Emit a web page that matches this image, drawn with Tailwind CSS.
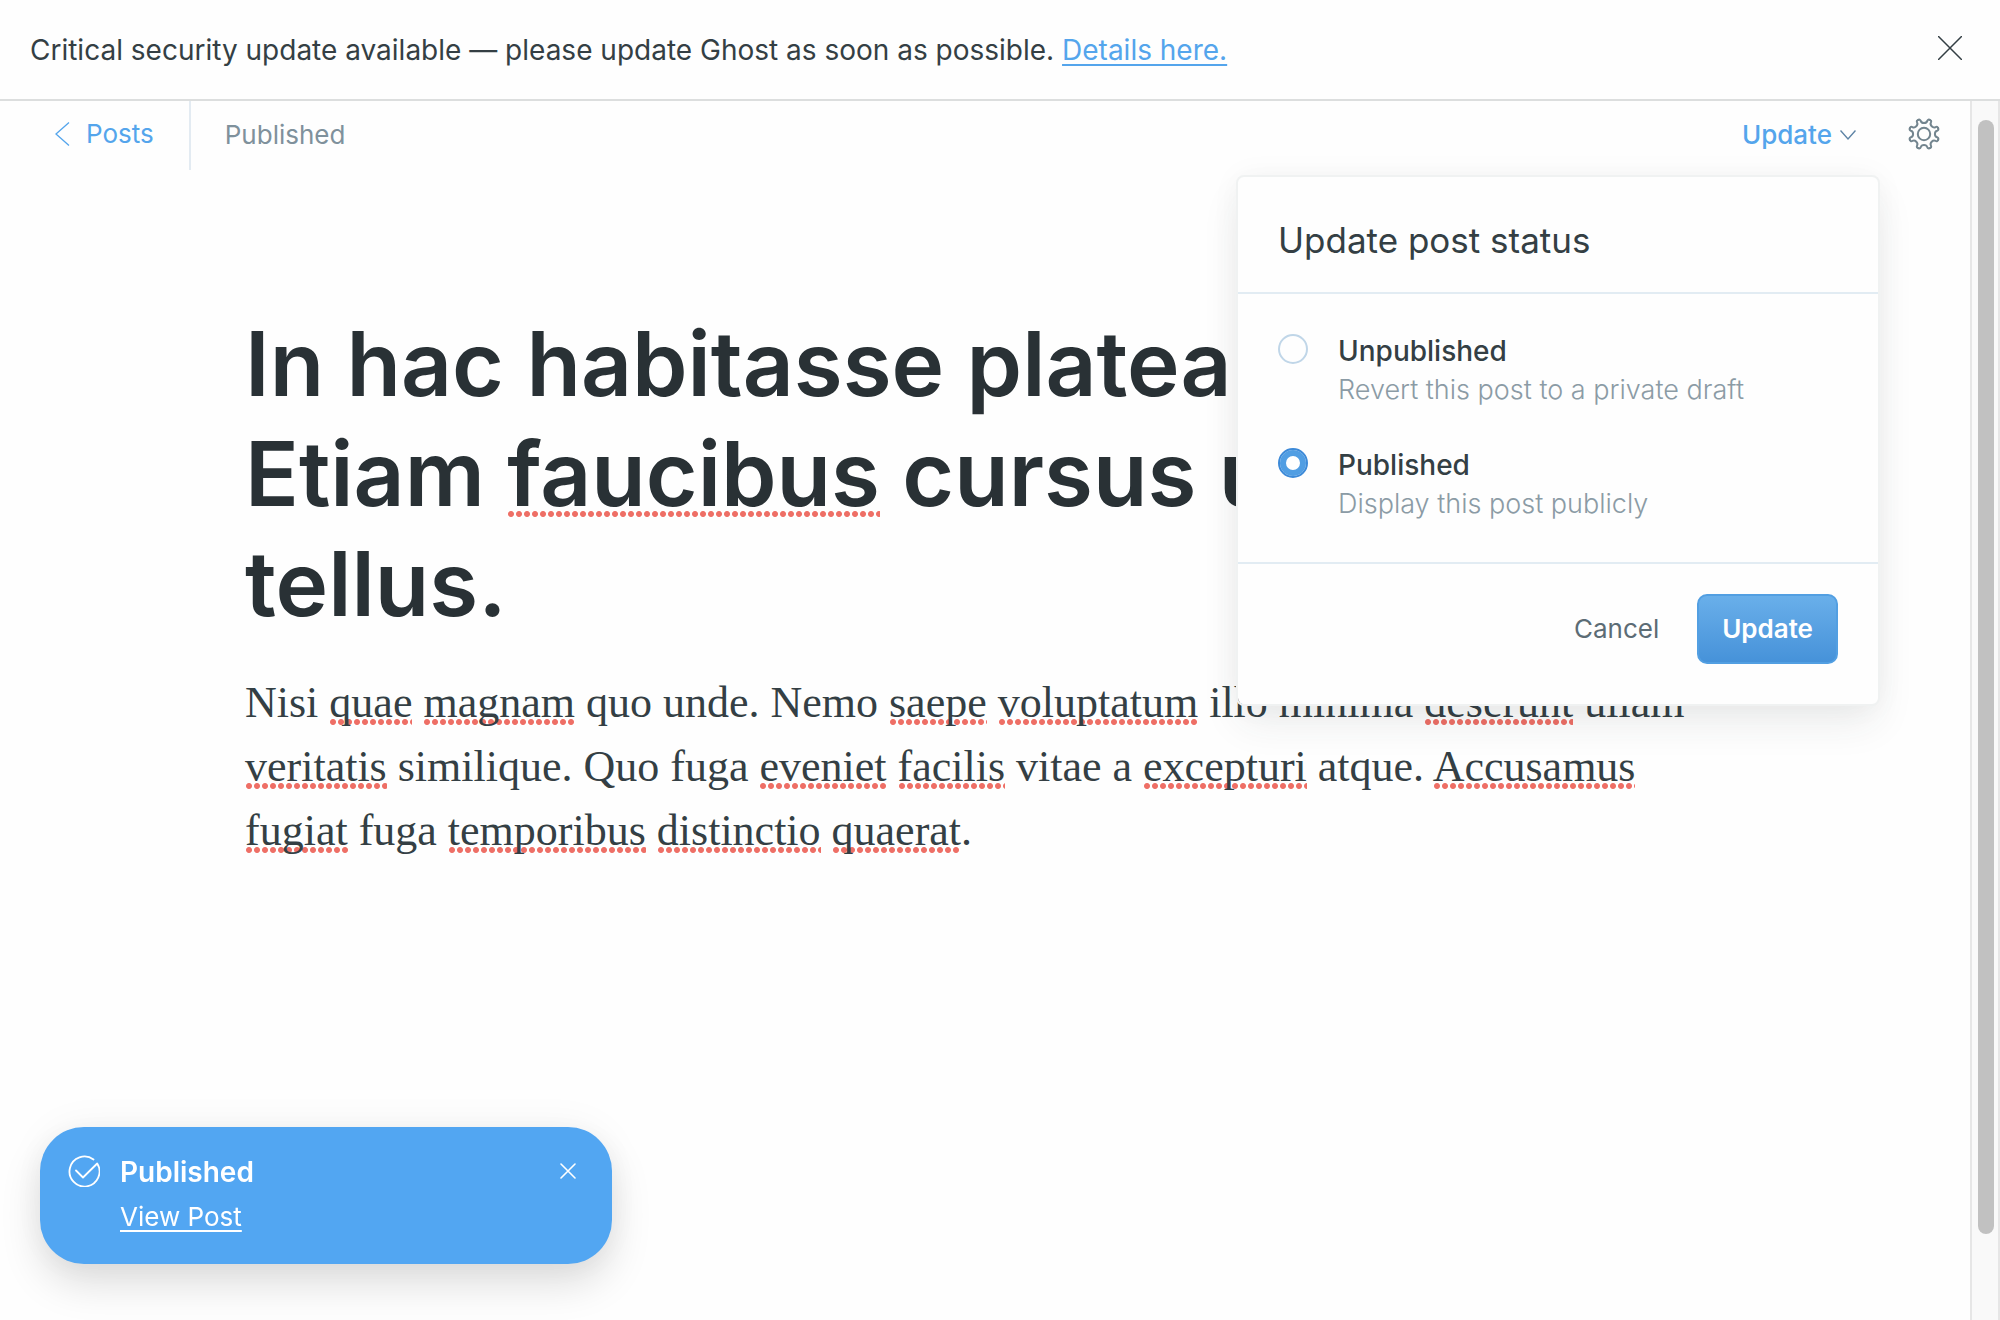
<!DOCTYPE html>
<html lang="en">
<head>
<meta charset="utf-8">
<meta name="viewport" content="width=device-width, initial-scale=1">
<title>Editor - Ghost</title>
<script src="https://cdn.jsdelivr.net/npm/@tailwindcss/browser@4"></script>
</head>
<body class="flex h-screen flex-col overflow-hidden bg-[#fefefe] font-['Inter',sans-serif] text-[#343f44]">

<!-- Upgrade notice -->
<aside class="flex shrink-0 items-start justify-between border-b-2 border-[#dcdede] px-[30px] pt-7 pb-[27px] text-[28px] leading-11">
  <p>Critical security update available — please update Ghost as soon as possible. <a href="#" class="text-[#54a5ec] underline decoration-2 underline-offset-4">Details here.</a></p>
  <button type="button" aria-label="Dismiss" class="flex size-10 items-center justify-center">
    <svg class="size-6" viewBox="0 0 24 24" fill="none" stroke="#343f44" stroke-width="1.5"><path d="M0 0l24 24M24 0L0 24"/></svg>
  </button>
</aside>

<div class="flex min-h-0 flex-1">
  <main class="min-w-0 flex-1">
    <header class="flex h-[69px] items-center text-[26px] leading-8">
      <a href="#" class="flex h-full items-center gap-4 border-r-2 border-[#e3ebf2] pr-[35px] pb-[3px] pl-[55px] text-[#54a5ec]">
        <svg class="h-6 w-[15px]" viewBox="0 0 15 24" fill="none" stroke="currentColor" stroke-width="1.3"><path d="M14 .5L1 12l13 11.500"/></svg>
        Posts
      </a>
      <span class="pb-[2px] pl-[34px] text-[#7f919c]">Published</span>

      <div class="relative ml-auto pb-[2px]">
        <button type="button" class="flex items-center gap-2 font-medium text-[#54a5ec]">
          Update
          <svg class="h-3 w-4" viewBox="0 0 16 12" fill="none" stroke="#5d83a5" stroke-width="1.4"><path d="M.5 1.500L8 10l7.500-8.500"/></svg>
        </button>

        <!-- Publish menu -->
        <form class="absolute top-14 -right-6 z-10 w-[644px] rounded-lg border-2 border-[#f0f2f2] bg-[#fefefe] bg-clip-padding shadow-[0_20px_40px_-4px_rgba(39,50,56,0.09),0_0_30px_rgba(39,50,56,0.04)]">
          <h2 class="border-b-2 border-[#e2ecf3] px-10 pt-[39px] pb-7 text-[35px] leading-12">Update post status</h2>
          <div class="flex flex-col gap-9 border-b-2 border-[#e2ecf3] px-10 pt-9 pb-10">
            <div class="flex gap-[30px]">
              <input type="radio" name="status" id="unpublished" class="mt-1 size-[30px] shrink-0 appearance-none rounded-full border-2 border-[#c0d6e8] bg-[#fefefe] checked:border-[#3d8ad8] checked:bg-white checked:shadow-[inset_0_0_0_6px_#519ee3]">
              <label for="unpublished" class="flex flex-col">
                <span class="text-[28px] leading-[42px] font-medium">Unpublished</span>
                <span class="text-[27px] leading-9 font-light text-[#8b9ba5]">Revert this post to a private draft</span>
              </label>
            </div>
            <div class="flex gap-[30px]">
              <input type="radio" name="status" id="published" checked class="mt-1 size-[30px] shrink-0 appearance-none rounded-full border-2 border-[#c0d6e8] bg-[#fefefe] checked:border-[#3d8ad8] checked:bg-white checked:shadow-[inset_0_0_0_6px_#519ee3]">
              <label for="published" class="flex flex-col">
                <span class="text-[28px] leading-[42px] font-medium">Published</span>
                <span class="text-[27px] leading-9 font-light text-[#8b9ba5]">Display this post publicly</span>
              </label>
            </div>
          </div>
          <div class="flex items-center justify-end gap-[38px] px-10 pt-[30px] pb-10">
            <button type="button" class="text-[#5c6c75]">Cancel</button>
            <button type="submit" class="h-[70px] rounded-[10px] border-2 border-[#529fe2] bg-linear-to-b from-[#69afea] to-[#4692d9] px-[23px] font-semibold text-white">Update</button>
          </div>
        </form>
      </div>

      <button type="button" aria-label="Settings" class="mr-[30px] ml-[52px] pb-[3px]">
        <svg class="size-8" viewBox="0 0 32 32" fill="none" stroke="#73858f" stroke-width="2" stroke-linecap="round" stroke-linejoin="round">
          <defs><path id="tooth" d="M10.140 1.860C11.300 1.400 12.200 1.500 12.700 2.900C13.200 4.500 14.300 5.100 16 5.100S18.800 4.500 19.300 2.900C19.800 1.500 20.700 1.400 21.860 1.860"/></defs>
          <circle cx="16" cy="16" r="6.200"/>
          <use href="#tooth"/>
          <use href="#tooth" transform="rotate(45 16 16)"/>
          <use href="#tooth" transform="rotate(90 16 16)"/>
          <use href="#tooth" transform="rotate(135 16 16)"/>
          <use href="#tooth" transform="rotate(180 16 16)"/>
          <use href="#tooth" transform="rotate(225 16 16)"/>
          <use href="#tooth" transform="rotate(270 16 16)"/>
          <use href="#tooth" transform="rotate(315 16 16)"/>
        </svg>
      </button>
    </header>

    <article class="mx-auto max-w-[1480px] pt-[139px]">
      <h1 class="text-[89px] leading-[110px] font-semibold text-[#293135]">In hac habitasse platea dictumst. Etiam <span class="bg-[radial-gradient(circle,#ee6f66_2.5px,transparent_3.5px)] bg-[length:8px_6px] bg-[position:left_bottom_10px] bg-repeat-x">faucibus</span> cursus urna ut tellus.</h1>
      <p class="mt-8 font-['Liberation_Serif',serif] text-[44px] leading-16 [&_span]:bg-[radial-gradient(circle,#ee6f66_2.5px,transparent_3.5px)] [&_span]:bg-[length:8px_6px] [&_span]:bg-[position:left_bottom_2px] [&_span]:bg-repeat-x">Nisi <span>quae</span> <span>magnam</span> quo unde. Nemo <span>saepe</span> <span>voluptatum</span> illo minima <span>deserunt</span> ullam <span>veritatis</span> similique. Quo fuga <span>eveniet</span> <span>facilis</span> vitae a <span>excepturi</span> atque. <span>Accusamus</span> <span>fugiat</span> fuga <span>temporibus</span> <span>distinctio</span> <span>quaerat</span>.</p>
    </article>
  </main>

  <div class="w-[30px] shrink-0 border-x-2 border-[#e6e6e6] bg-[#f9f9f9] pt-[19px] pr-1 pl-[6px]">
    <div class="h-[92.800%] w-4 rounded-full bg-[#c1c1c1]"></div>
  </div>
</div>

<!-- Notification -->
<div role="status" class="fixed bottom-14 left-10 flex w-[572px] items-start gap-5 rounded-[44px] bg-[#52a6f2] pt-[26px] pr-9 pb-[25px] pl-7 text-white shadow-[0_20px_40px_rgba(0,0,0,0.13),0_0_40px_rgba(0,0,0,0.05)]">
  <svg class="mt-[2px] size-8" viewBox="0 0 32 32" fill="none" stroke="currentColor" stroke-width="1.800" stroke-linecap="round" stroke-linejoin="round"><path d="M25.500 4.500A15 15 0 1 0 29.200 8.500L15 22.500l-7-7"/></svg>
  <div class="flex flex-1 flex-col items-start gap-1">
    <strong class="text-[28px] leading-[38px] font-semibold">Published</strong>
    <a href="#" class="text-[26px] leading-11 underline decoration-2 underline-offset-4">View Post</a>
  </div>
  <button type="button" aria-label="Close" class="mt-[10px]">
    <svg class="size-4" viewBox="0 0 16 16" fill="none" stroke="currentColor" stroke-width="1.600" stroke-linecap="round"><path d="M1 1l14 14M15 1L1 15"/></svg>
  </button>
</div>
</body>
</html>
